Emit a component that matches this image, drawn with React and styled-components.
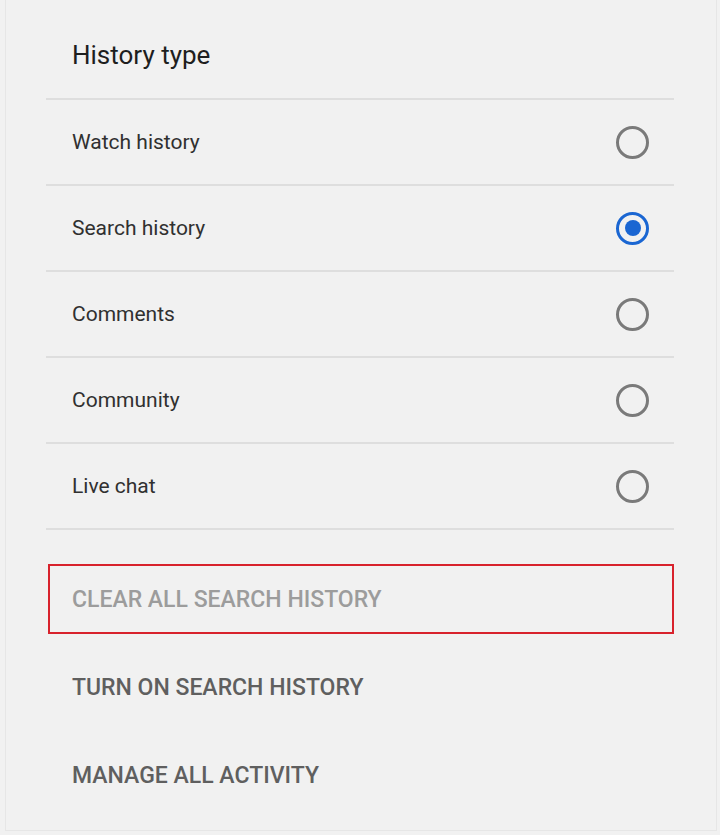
import styled, { createGlobalStyle } from "styled-components";

const GlobalStyle = createGlobalStyle`
  body {
    margin: 0;
    background-color: #f1f1f1;
    font-family: Roboto, "Liberation Sans", Arial, sans-serif;
  }
`;

const Card = styled.div`
  box-sizing: border-box;
  height: 831px;
  margin: 0 3px 4px 5px;
  padding: 0 42px 0 40px;
  background-color: #f1f1f1;
  border: 1px solid #e6e6e6;
  border-top: none;
`;

const Title = styled.h2`
  margin: 0;
  padding: 39px 26px 27px;
  font-size: 26px;
  line-height: 32px;
  font-weight: 400;
  color: #1e1e1e;
  border-bottom: 2px solid #dedede;
`;

const OptionRow = styled.label`
  display: flex;
  align-items: center;
  justify-content: space-between;
  height: 84px;
  padding: 0 26px;
  border-bottom: 2px solid #dedede;
  cursor: pointer;
`;

const OptionLabel = styled.span`
  font-size: 21px;
  color: #303030;
`;

const Radio = styled.span`
  box-sizing: border-box;
  display: flex;
  align-items: center;
  justify-content: center;
  width: 33px;
  height: 33px;
  margin-right: -1px;
  border-radius: 50%;
  border: 3px solid ${(p) => (p.$checked ? "#1a66d2" : "#7a7a7a")};

  &::after {
    content: "";
    width: 16px;
    height: 16px;
    border-radius: 50%;
    background-color: ${(p) => (p.$checked ? "#1a66d2" : "transparent")};
  }
`;

const Actions = styled.div`
  display: flex;
  flex-direction: column;
  gap: 18px;
  margin-top: 34px;
`;

const ActionButton = styled.button`
  box-sizing: border-box;
  display: flex;
  align-items: center;
  height: 70px;
  margin-left: 2px;
  padding: 0 22px;
  background: none;
  border: 2px solid ${(p) => (p.$highlight ? "#d8222c" : "transparent")};
  font-family: Roboto, "Liberation Sans", Arial, sans-serif;
  font-size: 23px;
  font-weight: 500;
  text-transform: uppercase;
  color: ${(p) => (p.$disabled ? "#9c9c9c" : "#5f5f5f")};
  cursor: pointer;
  text-align: left;
`;

const options = [
  { label: "Watch history", checked: false },
  { label: "Search history", checked: true },
  { label: "Comments", checked: false },
  { label: "Community", checked: false },
  { label: "Live chat", checked: false },
];

const App = () => {
  return (
    <>
      <GlobalStyle />
      <Card>
        <Title>History type</Title>
        {options.map((o) => (
          <OptionRow key={o.label}>
            <OptionLabel>{o.label}</OptionLabel>
            <Radio $checked={o.checked} />
          </OptionRow>
        ))}
        <Actions>
          <ActionButton $highlight $disabled>Clear all search history</ActionButton>
          <ActionButton>Turn on search history</ActionButton>
          <ActionButton>Manage all activity</ActionButton>
        </Actions>
      </Card>
    </>
  );
};

export default App;
